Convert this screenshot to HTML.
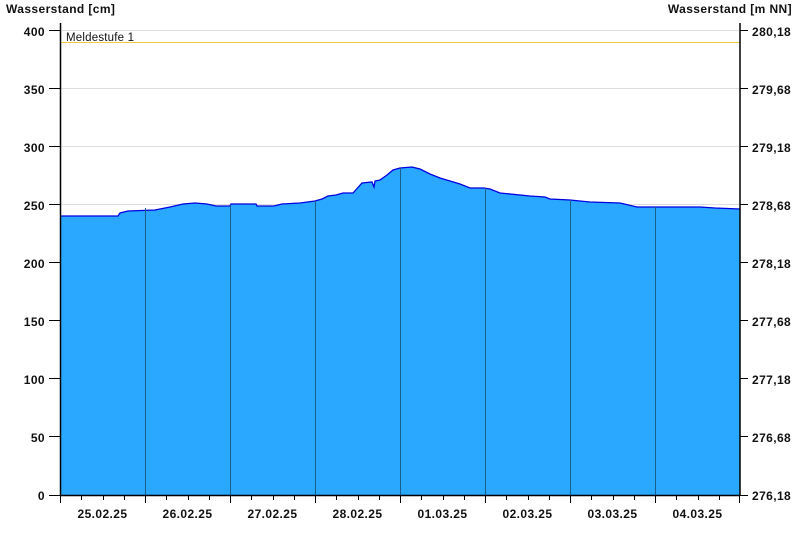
<!DOCTYPE html>
<html><head><meta charset="utf-8"><style>
html,body{margin:0;padding:0;background:#fff;}
svg{display:block;}
text{font-family:"Liberation Sans",Arial,sans-serif;font-weight:bold;font-size:12px;fill:#111;letter-spacing:0.4px;}
</style></head><body>
<svg width="800" height="550" viewBox="0 0 800 550" xmlns="http://www.w3.org/2000/svg">
<text x="6" y="13">Wasserstand [cm]</text>
<text x="792" y="13" text-anchor="end">Wasserstand [m NN]</text>
<g stroke="#dddddd" stroke-width="1">
<line x1="61" y1="30.5" x2="740" y2="30.5"/>
<line x1="61" y1="88.5" x2="740" y2="88.5"/>
<line x1="61" y1="146.5" x2="740" y2="146.5"/>
<line x1="61" y1="204.5" x2="740" y2="204.5"/>
</g>
<line x1="61" y1="42.5" x2="740" y2="42.5" stroke="#f5c842" stroke-width="1"/>
<text x="66" y="41" style="font-weight:normal;font-size:11.5px;letter-spacing:0.2px">Meldestufe 1</text>
<polygon fill="#2aa8ff" stroke="none" points="61,495 61,216 118,216 120,213 128,211 155,210 170,207 183,204 195,203 207,204 216,206 230,206 231,204 256,204 257,206 274,206 282,204 300,203 315,201 322,199 328,196 336,195 343,193 353,193 362,183 372,182 374,187 375,181 380,180 387,175 393,170 400,168 412,167 420,169 430,174 440,178 450,181 460,184 470,188 484,188 490,189 500,193 530,196 545,197 550,199 570,200 590,202 620,203 637,207 655,207 700,207 715,208 740,209 740,495"/>
<polyline fill="none" stroke="#0000e0" stroke-width="1.3" points="61,216 118,216 120,213 128,211 155,210 170,207 183,204 195,203 207,204 216,206 230,206 231,204 256,204 257,206 274,206 282,204 300,203 315,201 322,199 328,196 336,195 343,193 353,193 362,183 372,182 374,187 375,181 380,180 387,175 393,170 400,168 412,167 420,169 430,174 440,178 450,181 460,184 470,188 484,188 490,189 500,193 530,196 545,197 550,199 570,200 590,202 620,203 637,207 655,207 700,207 715,208 740,209"/>
<g stroke="#1a5f94" stroke-width="1">
<line x1="145.5" y1="208" x2="145.5" y2="495"/>
<line x1="230.5" y1="205" x2="230.5" y2="495"/>
<line x1="315.5" y1="201" x2="315.5" y2="495"/>
<line x1="400.5" y1="168" x2="400.5" y2="495"/>
<line x1="485.5" y1="188" x2="485.5" y2="495"/>
<line x1="570.5" y1="200" x2="570.5" y2="495"/>
<line x1="655.5" y1="207" x2="655.5" y2="495"/>
</g>
<g stroke="#000" stroke-width="1.5">
<line x1="60.5" y1="23" x2="60.5" y2="496"/>
<line x1="740" y1="23" x2="740" y2="496"/>
<line x1="60" y1="495.5" x2="740" y2="495.5"/>
</g>
<g stroke="#000" stroke-width="1">
<line x1="49" y1="30.5" x2="60" y2="30.5"/><line x1="49" y1="88.5" x2="60" y2="88.5"/><line x1="49" y1="146.5" x2="60" y2="146.5"/><line x1="49" y1="204.5" x2="60" y2="204.5"/><line x1="49" y1="262.5" x2="60" y2="262.5"/><line x1="49" y1="320.5" x2="60" y2="320.5"/><line x1="49" y1="378.5" x2="60" y2="378.5"/><line x1="49" y1="436.5" x2="60" y2="436.5"/><line x1="49" y1="495.5" x2="60" y2="495.5"/>
<line x1="740" y1="30.5" x2="748" y2="30.5"/><line x1="740" y1="88.5" x2="748" y2="88.5"/><line x1="740" y1="146.5" x2="748" y2="146.5"/><line x1="740" y1="204.5" x2="748" y2="204.5"/><line x1="740" y1="262.5" x2="748" y2="262.5"/><line x1="740" y1="320.5" x2="748" y2="320.5"/><line x1="740" y1="378.5" x2="748" y2="378.5"/><line x1="740" y1="436.5" x2="748" y2="436.5"/><line x1="740" y1="495.5" x2="748" y2="495.5"/>
<line x1="60.5" y1="496" x2="60.5" y2="503"/><line x1="145.5" y1="496" x2="145.5" y2="503"/><line x1="230.5" y1="496" x2="230.5" y2="503"/><line x1="315.5" y1="496" x2="315.5" y2="503"/><line x1="400.5" y1="496" x2="400.5" y2="503"/><line x1="485.5" y1="496" x2="485.5" y2="503"/><line x1="570.5" y1="496" x2="570.5" y2="503"/><line x1="655.5" y1="496" x2="655.5" y2="503"/><line x1="739.5" y1="496" x2="739.5" y2="503"/>
<line x1="81.5" y1="496" x2="81.5" y2="500"/><line x1="103.5" y1="496" x2="103.5" y2="500"/><line x1="124.5" y1="496" x2="124.5" y2="500"/>
<line x1="166.5" y1="496" x2="166.5" y2="500"/><line x1="188.5" y1="496" x2="188.5" y2="500"/><line x1="209.5" y1="496" x2="209.5" y2="500"/>
<line x1="251.5" y1="496" x2="251.5" y2="500"/><line x1="273.5" y1="496" x2="273.5" y2="500"/><line x1="294.5" y1="496" x2="294.5" y2="500"/>
<line x1="336.5" y1="496" x2="336.5" y2="500"/><line x1="358.5" y1="496" x2="358.5" y2="500"/><line x1="379.5" y1="496" x2="379.5" y2="500"/>
<line x1="421.5" y1="496" x2="421.5" y2="500"/><line x1="443.5" y1="496" x2="443.5" y2="500"/><line x1="464.5" y1="496" x2="464.5" y2="500"/>
<line x1="506.5" y1="496" x2="506.5" y2="500"/><line x1="528.5" y1="496" x2="528.5" y2="500"/><line x1="549.5" y1="496" x2="549.5" y2="500"/>
<line x1="591.5" y1="496" x2="591.5" y2="500"/><line x1="613.5" y1="496" x2="613.5" y2="500"/><line x1="634.5" y1="496" x2="634.5" y2="500"/>
<line x1="676.5" y1="496" x2="676.5" y2="500"/><line x1="698.5" y1="496" x2="698.5" y2="500"/><line x1="719.5" y1="496" x2="719.5" y2="500"/>
</g>
<g text-anchor="end">
<text x="45" y="36">400</text><text x="45" y="94">350</text><text x="45" y="152">300</text><text x="45" y="210">250</text><text x="45" y="268">200</text><text x="45" y="326">150</text><text x="45" y="384">100</text><text x="45" y="442">50</text><text x="45" y="500">0</text>
</g>
<g>
<text x="752" y="36">280,18</text><text x="752" y="94">279,68</text><text x="752" y="152">279,18</text><text x="752" y="210">278,68</text><text x="752" y="268">278,18</text><text x="752" y="326">277,68</text><text x="752" y="384">277,18</text><text x="752" y="442">276,68</text><text x="752" y="500">276,18</text>
</g>
<g text-anchor="middle">
<text x="102.5" y="518">25.02.25</text><text x="187.5" y="518">26.02.25</text><text x="272.5" y="518">27.02.25</text><text x="357.5" y="518">28.02.25</text><text x="442.5" y="518">01.03.25</text><text x="527.5" y="518">02.03.25</text><text x="612.5" y="518">03.03.25</text><text x="697.5" y="518">04.03.25</text>
</g>
</svg>
</body></html>
